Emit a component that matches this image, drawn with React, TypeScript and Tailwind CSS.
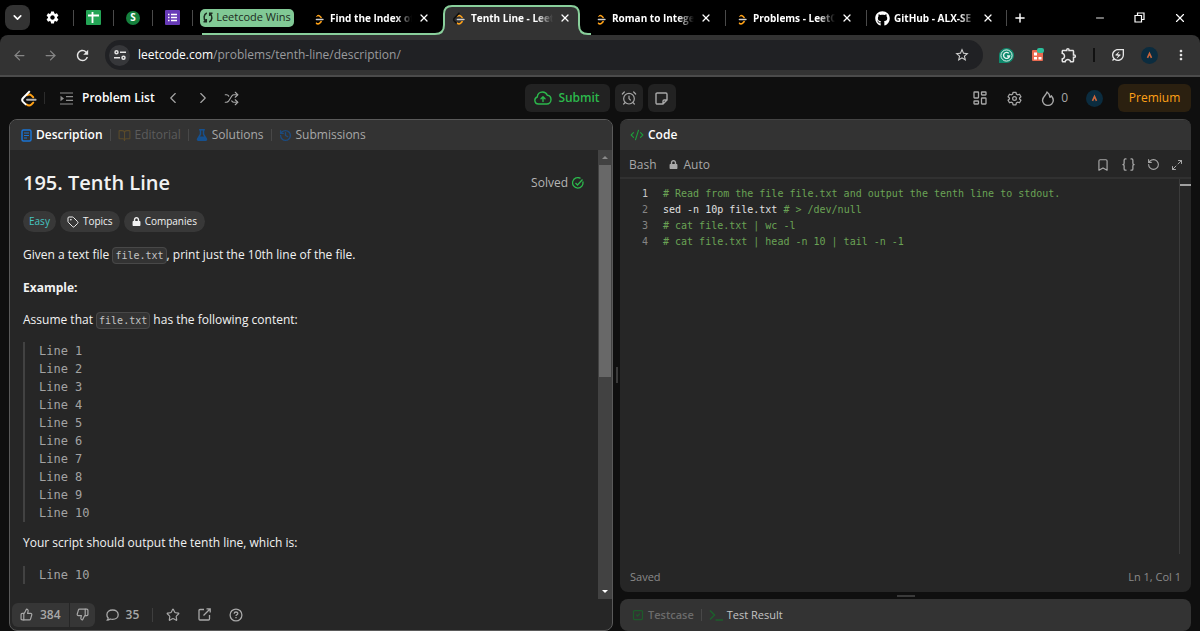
import type { ReactNode } from "react";
import {
  AlarmClock,
  ArrowLeft,
  ArrowRight,
  BookOpen,
  Bookmark,
  Braces,
  ChevronDown,
  ChevronLeft,
  ChevronRight,
  CodeXml,
  History,
  Maximize2,
  Minus,
  Plus,
  RotateCcw,
  Shuffle,
  SquareCheck,
  Star,
  Tag,
  ThumbsDown,
  ThumbsUp,
  X,
} from "lucide-react";
import { FaFlask, FaGithub, FaLock } from "react-icons/fa";
import {
  MdMoreVert,
  MdOutlineEnergySavingsLeaf,
  MdOutlineExtension,
  MdRefresh,
  MdSettings,
  MdStarBorder,
} from "react-icons/md";

const tabs = [
  { title: "Roman to Intege", icon: "leetcode" },
  { title: "Problems - LeetC", icon: "leetcode" },
  { title: "GitHub - ALX-SE", icon: "github" },
];

const fileLines = Array.from({ length: 10 }, (_, i) => `Line ${i + 1}`);

const codeLines = [
  { code: "", comment: "# Read from the file file.txt and output the tenth line to stdout." },
  { code: "sed -n 10p file.txt ", comment: "# > /dev/null" },
  { code: "", comment: "# cat file.txt | wc -l" },
  { code: "", comment: "# cat file.txt | head -n 10 | tail -n -1" },
];

function LeetLogo({ size, stem, bar }: { size: number; stem: string; bar: string }) {
  return (
    <svg width={size} height={size} viewBox="0 0 24 24" fill="none" strokeWidth="2.8" className="shrink-0">
      <path d="M9.500 20.500c2 1.800 4.600 1.800 6.600 0l2.600-2.700" stroke="#ffa116" strokeLinecap="round" />
      <path d="M10 7.500c2.200-1.600 4.600-1.400 6.400.400l2.300 2.300" stroke="#ffa116" strokeLinecap="round" />
      <path d="M13.800 1.500L4.400 11.300c-1.700 1.800-1.700 3.800 0 5.500l4.400 4.200" stroke={stem} />
      <path d="M10 13.800h12" stroke={bar} strokeLinecap="round" />
    </svg>
  );
}

function Avatar() {
  return (
    <svg width="17" height="17" viewBox="0 0 17 17">
      <circle cx="8.500" cy="8.500" r="8.500" fill="#0b2c3f" />
      <path d="M6.500 10.800l2-4.300 2 4.300" fill="none" stroke="#c9663c" strokeWidth="1.600" />
    </svg>
  );
}

function TabSep() {
  return <span className="h-4 w-px shrink-0 bg-[#4a4a4a]" />;
}

function Tab({ title, icon, active }: { title: string; icon: string; active?: boolean }) {
  return (
    <div className="relative flex h-[30px] w-[141px] shrink-0 items-center pb-1 pl-[9px]">
      {active && (
        <svg width="156" height="31" viewBox="0 0 156 31" className="absolute -left-2 top-0">
          <path d="M0 29c6 0 9-3 9-9V9c0-5 3-8 8-8h119c5 0 8 3 8 8v11c0 6 3 9 9 9v2H0z" fill="#333333" />
          <path d="M0 29c6 0 9-3 9-9V9c0-5 3-8 8-8h119c5 0 8 3 8 8v11c0 6 3 9 9 9h3" fill="none" stroke="#89cf9b" strokeWidth="2" />
        </svg>
      )}
      <span className="relative flex w-[19px] shrink-0 items-center">
        {icon === "github" ? (
          <FaGithub size={15} />
        ) : (
          <LeetLogo size={13} stem={active ? "#111111" : "#000000"} bar="#d0d0d0" />
        )}
      </span>
      <button className="relative w-[82px] whitespace-nowrap text-left text-[10px] font-bold [mask-image:linear-gradient(to_right,black_80%,transparent)]">
        {title}
      </button>
      <button aria-label="Close tab" className="relative ml-[6px] shrink-0">
        <X size={12} strokeWidth={2.500} />
      </button>
    </div>
  );
}

function TabStrip() {
  return (
    <div className="flex h-[35px] items-center bg-black pl-[5px] text-white">
      <button aria-label="Search tabs" className="flex size-[25px] shrink-0 items-center justify-center rounded-lg bg-[#333333]">
        <ChevronDown size={13} strokeWidth={3} />
      </button>
      <div className="flex shrink-0 items-center gap-3 pl-[15px]">
        <MdSettings size={15} className="mr-px" />
        <TabSep />
        <svg width="15" height="15" viewBox="0 0 15 15">
          <rect width="15" height="15" rx="1" fill="#23a455" />
          <path d="M6.500 2v11M2 5.500h11" stroke="#fff" strokeWidth="1.800" />
        </svg>
        <TabSep />
        <span className="flex size-[14px] items-center justify-center rounded-full bg-[#15803d] text-[10px] font-bold">S</span>
        <TabSep />
        <svg width="15" height="15" viewBox="0 0 15 15">
          <rect width="15" height="15" rx="1" fill="#673ab7" />
          <path d="M6 4.500h6M6 7.500h6M6 10.500h6M3 4.500h1.500M3 7.500h1.500M3 10.500h1.500" stroke="#fff" strokeWidth="1.400" />
        </svg>
        <TabSep />
      </div>
      <div className="relative ml-[7px] flex h-full shrink-0 items-center">
        <button className="flex h-[18px] w-[94px] items-center justify-center gap-[3px] whitespace-nowrap rounded-[5px] bg-[#81c995] text-[11px] text-[#1c2b20]">
          <svg width="10" height="11" viewBox="0 0 10 11" fill="none" stroke="currentColor" strokeWidth="1.500" className="shrink-0">
            <path d="M3.800 1C.500 2.500.300 7 2.800 9.500M.500 9.700h2.800V7M6.200 10c3.300-1.500 3.500-6 1-8.500M9.500 1.300H6.700V4" />
          </svg>
          Leetcode Wins
        </button>
        <div className="ml-2 self-end">
          <Tab title="Find the Index of" icon="leetcode" />
        </div>
        <span className="absolute bottom-0 left-[2px] right-2 h-[2px] bg-[#89cf9b]" />
      </div>
      <div className="flex items-center self-end">
        <Tab title="Tenth Line - Leet" icon="leetcode" active />
        {tabs.map((tab, i) => (
          <div key={tab.title} className="flex items-center">
            {i > 0 && (
              <span className="-mr-px mb-1">
                <span className="block h-4 w-px bg-[#4a4a4a]" />
              </span>
            )}
            <Tab title={tab.title} icon={tab.icon} />
          </div>
        ))}
      </div>
      <button aria-label="New tab" className="-ml-px flex items-center gap-[6px]">
        <TabSep />
        <Plus size={14} strokeWidth={2.500} />
      </button>
      <div className="ml-auto flex items-center gap-7 pr-[13px]">
        <button aria-label="Minimize">
          <Minus size={12} strokeWidth={1.800} />
        </button>
        <button aria-label="Restore">
          <svg width="11" height="11" viewBox="0 0 11 11" fill="none" stroke="currentColor" strokeWidth="1.200">
            <path d="M1 3.500h6.500V10H1zM3.500 3.500V1H10v6.500H7.500" />
          </svg>
        </button>
        <button aria-label="Close window">
          <X size={14} strokeWidth={2} />
        </button>
      </div>
    </div>
  );
}

function AddressBar() {
  return (
    <div className="bg-black">
      <div className="flex h-[42px] items-center rounded-t-lg border-b-2 border-[#4b4b4b] bg-[#333333] pl-3 pr-[11px] text-[#e6e6e6]">
        <div className="flex items-center gap-4">
          <button aria-label="Back" className="text-[#868686]">
            <ArrowLeft size={15} />
          </button>
          <button aria-label="Forward" className="text-[#868686]">
            <ArrowRight size={15} />
          </button>
          <button aria-label="Reload">
            <MdRefresh size={17} />
          </button>
        </div>
        <div className="ml-[14px] flex h-[30px] flex-1 items-center rounded-full bg-[#202124] pl-1 pr-[13px]">
          <button aria-label="Site information" className="flex size-[21px] items-center justify-center rounded-full bg-[#36373a]">
            <svg width="12" height="12" viewBox="0 0 12 12" fill="none" stroke="currentColor" strokeWidth="1.500">
              <circle cx="2.500" cy="3.200" r="1.500" />
              <circle cx="9.500" cy="8.800" r="1.500" />
              <path d="M6 3.200h6M0 8.800h6" />
            </svg>
          </button>
          <div className="ml-2 text-xs text-white">
            leetcode.com<span className="text-[#9a9b9e]">/problems/tenth-line/description/</span>
          </div>
          <button aria-label="Bookmark this tab" className="ml-auto text-[#cfcfcf]">
            <MdStarBorder size={16} />
          </button>
        </div>
        <div className="ml-4 flex items-center gap-[15px]">
          <svg width="15" height="15" viewBox="0 0 15 15">
            <path d="M0 15V7.500A7.500 7.500 0 1 1 7.500 15z" fill="#0f8a6d" />
            <circle cx="7.500" cy="7.500" r="5.600" fill="none" stroke="#e8f4f0" strokeWidth="1" />
            <path d="M9.800 5.400a3 3 0 1 0 .700 2.600H8" fill="none" stroke="#e8f4f0" strokeWidth="1.400" />
          </svg>
          <svg width="16" height="14" viewBox="0 0 16 14">
            <rect x="3" y="2" width="11" height="11" rx="1" fill="#ea6a50" />
            <path d="M5 4.500h3v3H5zM5 9h3v2.500H5zM9.500 9h3v2.500h-3z" fill="#fff" />
            <rect x="8" y="0" width="7" height="5" rx="2" fill="#2bbf9c" />
          </svg>
          <MdOutlineExtension size={18} />
          <span className="h-[14px] w-[2px] bg-[#111111]" />
          <MdOutlineEnergySavingsLeaf size={16} />
          <Avatar />
          <button aria-label="Browser menu">
            <MdMoreVert size={16} />
          </button>
        </div>
      </div>
    </div>
  );
}

function SiteHeader() {
  return (
    <header className="grid h-[42px] grid-cols-[1fr_auto_1fr] items-center px-[9px] text-[#a8a8a8]">
      <div className="flex items-center pl-[11px]">
        <a href="#" aria-label="Home">
          <LeetLogo size={17} stem="#ffffff" bar="#b3b3b3" />
        </a>
        <span className="mx-[7px] h-3 w-px bg-[#2c2c2c]" />
        <a href="#" className="ml-2 flex items-center gap-2 text-xs font-semibold text-white">
          <svg width="14" height="13" viewBox="0 0 14 13" fill="none" stroke="#8d8d8d" strokeWidth="1.200">
            <path d="M0 1h13M6 4.700h7M6 8.300h7M0 12h13" />
            <path d="M.500 3.800l3.500 2.700L.500 9.200z" fill="#8d8d8d" stroke="none" />
          </svg>
          Problem List
        </a>
        <button aria-label="Previous problem" className="ml-[9px]">
          <ChevronLeft size={18} strokeWidth={1.500} />
        </button>
        <button aria-label="Next problem" className="ml-3">
          <ChevronRight size={18} strokeWidth={1.500} />
        </button>
        <button aria-label="Random problem" className="ml-3">
          <Shuffle size={15} strokeWidth={1.800} />
        </button>
      </div>
      <div className="flex gap-[5px]">
        <button className="flex h-7 w-[85px] items-center justify-center gap-[6px] rounded-md bg-[#222222] text-xs font-semibold text-[#2cb84c]">
          <svg width="18" height="14" viewBox="0 0 18 14" fill="none" stroke="currentColor" strokeWidth="1.400" strokeLinecap="round" strokeLinejoin="round">
            <path d="M4.500 13A3.600 3.600 0 0 1 3.300 6C3.500 3 5.800 1 8.500 1c2.200 0 4 1.200 4.800 3.200 2.200.200 3.700 2 3.700 4.300 0 2.500-1.900 4.500-4.300 4.500z" />
            <path d="M9 10.500V6M7 7.700L9 5.800l2 1.900" />
          </svg>
          Submit
        </button>
        <button aria-label="Timer" className="flex size-7 items-center justify-center rounded-md bg-[#222222]">
          <AlarmClock size={16} strokeWidth={1.800} />
        </button>
        <button aria-label="Notes" className="flex size-7 items-center justify-center rounded-md bg-[#222222]">
          <svg width="13" height="13" viewBox="0 0 13 13" fill="none" stroke="currentColor" strokeWidth="1.400" strokeLinejoin="round">
            <path d="M2.200 1h8.600c.700 0 1.200.500 1.200 1.200V8l-4 4H2.200C1.500 12 1 11.500 1 10.800V2.200C1 1.500 1.500 1 2.200 1zM12 8H9.200C8.500 8 8 8.500 8 9.200V12" />
          </svg>
        </button>
      </div>
      <div className="flex items-center justify-end">
        <button aria-label="Layout">
          <svg width="14" height="14" viewBox="0 0 14 14" fill="none" stroke="currentColor" strokeWidth="1.300">
            <rect x="1" y="1" width="4.500" height="6" rx=".500" />
            <rect x="8.500" y="1" width="4.500" height="3" rx=".500" />
            <rect x="1" y="10" width="4.500" height="3" rx=".500" />
            <rect x="8.500" y="7" width="4.500" height="6" rx=".500" />
          </svg>
        </button>
        <button aria-label="Settings" className="ml-5">
          <svg width="15" height="15" viewBox="0 0 24 24" fill="none" stroke="currentColor" strokeWidth="2" strokeLinejoin="round">
            <path d="M9.700 2h4.600l.700 3 2 1.100 3-.900 2.300 4-2.200 2.100v1.400l2.200 2.100-2.300 4-3-.900-2 1.100-.700 3H9.700L9 19l-2-1.100-3 .900-2.300-4 2.200-2.100v-1.400L1.700 9.200 4 5.200l3 .900L9 5z" />
            <circle cx="12" cy="12" r="3" />
          </svg>
        </button>
        <button className="ml-[19px] flex items-center gap-[6px] text-xs">
          <svg width="14" height="15" viewBox="0 0 14 15" fill="none" stroke="currentColor" strokeWidth="1.400" strokeLinejoin="round">
            <path d="M6 1C5.500 4 1.500 5.500 1.500 9.300a5.300 5 0 0 0 10.800 0c0-1.800-.800-3.200-2-4.600-.300.800-.700 1.300-1.400 1.600C8.700 4 7.800 2.200 6 1z" />
          </svg>
          0
        </button>
        <a href="#" aria-label="Profile" className="ml-[18px]">
          <Avatar />
        </a>
        <a href="#" className="ml-[15px] flex h-7 w-[73px] items-center justify-center rounded-md bg-[#2b2010] text-xs font-medium text-[#ffa116]">
          Premium
        </a>
      </div>
    </header>
  );
}

function PanelTab({ icon, children, className }: { icon: ReactNode; children: ReactNode; className?: string }) {
  return (
    <button className={`flex items-center gap-1 ${className ?? "text-[#a8a8a8]"}`}>
      {icon}
      {children}
    </button>
  );
}

function InlineCode({ children }: { children: ReactNode }) {
  return (
    <code className="rounded-[4px] border border-[#484848] bg-[#333333] px-[2px] py-[2px] font-['DejaVu_Sans_Mono',monospace] text-[10px] text-[#c4c4c4]">
      {children}
    </code>
  );
}

function Quote({ lines }: { lines: string[] }) {
  return (
    <pre className="border-l-2 border-[#424242] pl-[14px] font-['DejaVu_Sans_Mono',monospace] text-xs leading-[18px] text-[#a3a3a3]">
      {lines.join("\n")}
    </pre>
  );
}

function DescriptionPanel() {
  return (
    <section className="flex min-h-0 flex-col overflow-hidden rounded-lg border border-[#5a5a5a] bg-[#262626]">
      <div className="flex h-[30px] shrink-0 items-center gap-[7px] bg-[#333333] pl-[11px] text-xs">
        <PanelTab
          className="font-semibold text-white"
          icon={
            <svg width="11" height="13" viewBox="0 0 11 13" fill="none" stroke="#1a74d4" strokeWidth="1.500">
              <rect x="1" y="1" width="9" height="11" rx="1.500" />
              <path d="M3 4h5M3 6.500h5M3 9h3" strokeWidth="1.200" />
            </svg>
          }
        >
          Description
        </PanelTab>
        <span className="h-3 w-px bg-[#484848]" />
        <PanelTab className="text-[#5c5c5c]" icon={<BookOpen size={13} className="text-[#5a4a2a]" />}>
          Editorial
        </PanelTab>
        <span className="h-3 w-px bg-[#484848]" />
        <PanelTab icon={<FaFlask size={12} className="text-[#16508e]" />}>Solutions</PanelTab>
        <span className="h-3 w-px bg-[#484848]" />
        <PanelTab icon={<History size={13} strokeWidth={2.500} className="text-[#1c4a7e]" />}>Submissions</PanelTab>
      </div>

      <div className="flex min-h-0 flex-1">
        <div className="min-w-0 flex-1 overflow-hidden px-[13px] pt-[17px] text-xs text-[#f2f2f2]">
          <div className="flex items-center justify-between">
            <h1 className="text-xl font-semibold leading-8">195. Tenth Line</h1>
            <span className="flex items-center gap-1 pr-px text-[#b5b5b5]">
              Solved
              <svg width="12" height="12" viewBox="0 0 12 12" fill="none" stroke="#2cb84c" strokeWidth="1.300">
                <path d="M10.800 4.500A5.200 5.200 0 1 1 8.500 1.400M3.500 6l2 2 5-5.500" />
              </svg>
            </span>
          </div>
          <div className="mt-3 flex gap-1 text-[10px] leading-[21px]">
            <span className="rounded-full bg-[#383838] px-[6px] text-[#46c6c2]">Easy</span>
            <button className="flex items-center gap-1 rounded-full bg-[#383838] px-[7px]">
              <Tag size={12} />
              Topics
            </button>
            <button className="flex items-center gap-1 rounded-full bg-[#383838] px-2">
              <FaLock size={9} />
              Companies
            </button>
          </div>
          <p className="mt-[14px] leading-[18px]">
            Given a text file <InlineCode>file.txt</InlineCode>, print just the 10th line of the file.
          </p>
          <p className="mt-[14px] font-bold leading-[18px]">Example:</p>
          <p className="mt-[14px] leading-[18px]">
            Assume that <InlineCode>file.txt</InlineCode> has the following content:
          </p>
          <div className="my-3">
            <Quote lines={fileLines} />
          </div>
          <p className="mb-[14px] leading-[18px]">Your script should output the tenth line, which is:</p>
          <Quote lines={["Line 10"]} />
        </div>
        <div className="flex w-[14px] flex-col items-center bg-[#424242]">
          <button aria-label="Scroll up" className="flex h-[15px] items-center">
            <span className="border-x-[3px] border-b-[3px] border-x-transparent border-b-[#8a8a8a]" />
          </button>
          <div className="h-[212px] w-3 bg-[#686868]" />
          <button aria-label="Scroll down" className="mt-auto flex h-[15px] items-center">
            <span className="border-x-[3px] border-t-[3px] border-x-transparent border-t-white" />
          </button>
        </div>
      </div>

      <div className="flex h-[31px] shrink-0 items-center pl-[2px] text-xs font-semibold text-[#a8a8a8]">
        <div className="flex h-6 gap-px overflow-hidden rounded-md">
          <button className="flex items-center gap-[7px] bg-[#363636] px-2">
            <ThumbsUp size={13} strokeWidth={2.200} />
            384
          </button>
          <button aria-label="Dislike" className="flex items-center bg-[#363636] px-[6px]">
            <ThumbsDown size={13} strokeWidth={2.200} />
          </button>
        </div>
        <button className="ml-[11px] flex items-center gap-[7px]">
          <svg width="13" height="12" viewBox="0 0 13 12" fill="none" stroke="currentColor" strokeWidth="1.300" strokeLinejoin="round">
            <path d="M1 11.200c.900-.600 1.200-1.400 1.200-2.200A4.600 4.600 0 0 1 .900 5.700C.900 3 3.400 1 6.600 1s5.600 2 5.600 4.700-2.400 4.700-5.600 4.700c-.900 0-1.700-.100-2.400-.400-.900.700-2 1.200-3.200 1.200z" />
          </svg>
          35
        </button>
        <span className="mx-[13px] h-[14px] w-px bg-[#3e3e3e]" />
        <div className="flex items-center gap-[18px]">
          <button aria-label="Favorite">
            <Star size={14} />
          </button>
          <button aria-label="Share">
            <svg width="13" height="13" viewBox="0 0 13 13" fill="none" stroke="currentColor" strokeWidth="1.300">
              <path d="M6 1.500H2a1 1 0 0 0-1 1V11a1 1 0 0 0 1 1h8.500a1 1 0 0 0 1-1V7M8.500.800h3.700v3.700M12 1L5.500 7.500" />
            </svg>
          </button>
          <button aria-label="Help">
            <svg width="14" height="14" viewBox="0 0 14 14" fill="none" stroke="currentColor" strokeWidth="1.300">
              <circle cx="7" cy="7" r="5.900" />
              <path d="M5.200 5.700c0-2.300 3.600-2.200 3.600-.200 0 1.200-1.800 1.200-1.800 2.400M7 9v1.300" />
            </svg>
          </button>
        </div>
      </div>
    </section>
  );
}

function CodePanel() {
  return (
    <section className="flex min-h-0 flex-1 flex-col overflow-hidden rounded-lg border-t border-[#444444] bg-[#262626]">
      <div className="flex h-[30px] shrink-0 items-center bg-[#333333] pl-[10px] text-xs">
        <PanelTab className="font-semibold text-white" icon={<CodeXml size={14} className="text-[#1e9a3a]" />}>
          Code
        </PanelTab>
      </div>
      <div className="flex h-[29px] shrink-0 items-center border-b-2 border-[#313131] pl-[9px] pr-2 pt-[2px] text-xs text-[#a8a8a8]">
        <button>Bash</button>
        <button className="ml-3 flex items-center gap-[6px]">
          <FaLock size={9} />
          Auto
        </button>
        <div className="ml-auto flex items-center gap-[11px]">
          <button aria-label="Bookmark">
            <Bookmark size={14} />
          </button>
          <button aria-label="Format code">
            <Braces size={15} />
          </button>
          <button aria-label="Reset code">
            <RotateCcw size={13} />
          </button>
          <button aria-label="Full screen">
            <Maximize2 size={12} />
          </button>
        </div>
      </div>
      <div className="flex min-h-0 flex-1">
        <ol className="min-w-0 flex-1 pt-[7px] font-['DejaVu_Sans_Mono',monospace] text-[10px] leading-4">
          {codeLines.map((line, i) => (
            <li key={line.comment} className="flex">
              <span className={`w-7 text-right ${i === 0 ? "text-[#c6c6c6]" : "text-[#858585]"}`}>{i + 1}</span>
              <code className="ml-[15px] whitespace-pre font-[inherit] text-[#e0e0e0]">
                {line.code}
                <span className="text-[#6aa355]">{line.comment}</span>
              </code>
            </li>
          ))}
        </ol>
        <div className="w-3 border-l border-[#3b3b3b] pt-[5px]">
          <div className="h-[2px] bg-[#a0a0a0]" />
        </div>
      </div>
      <div className="flex h-[38px] shrink-0 items-center justify-between px-[10px] pt-2 text-[11px] text-[#8a8a8a]">
        <span>Saved</span>
        <span>Ln 1, Col 1</span>
      </div>
    </section>
  );
}

export default function App() {
  return (
    <div className="flex h-screen flex-col overflow-hidden bg-[#0f0f0f] font-['Open_Sans','Noto_Sans',sans-serif]">
      <TabStrip />
      <AddressBar />
      <SiteHeader />
      <main className="grid min-h-0 flex-1 grid-cols-[604fr_7px_571fr] px-[9px]">
        <DescriptionPanel />
        <div className="flex items-center justify-center">
          <span className="h-4 w-[2px] bg-[#3a3a3a]" />
        </div>
        <div className="flex min-h-0 flex-col">
          <CodePanel />
          <div className="flex h-[7px] shrink-0 items-center justify-center">
            <span className="h-[2px] w-[18px] bg-[#3a3a3a]" />
          </div>
          <section className="flex h-8 shrink-0 items-center gap-[7px] rounded-lg bg-[#333333] pl-3 text-[11px]">
            <PanelTab className="font-semibold text-[#6b6b6b]" icon={<SquareCheck size={12} strokeWidth={2.500} className="text-[#1d5a2a]" />}>
              Testcase
            </PanelTab>
            <span className="h-3 w-px bg-[#484848]" />
            <PanelTab
              className="text-[#c4c4c4]"
              icon={
                <svg width="14" height="12" viewBox="0 0 14 12" fill="none" stroke="#1d5f2c" strokeWidth="1.600">
                  <path d="M1 1.500L5.500 6 1 10.500M6.500 11H14" />
                </svg>
              }
            >
              Test Result
            </PanelTab>
          </section>
        </div>
      </main>
    </div>
  );
}
